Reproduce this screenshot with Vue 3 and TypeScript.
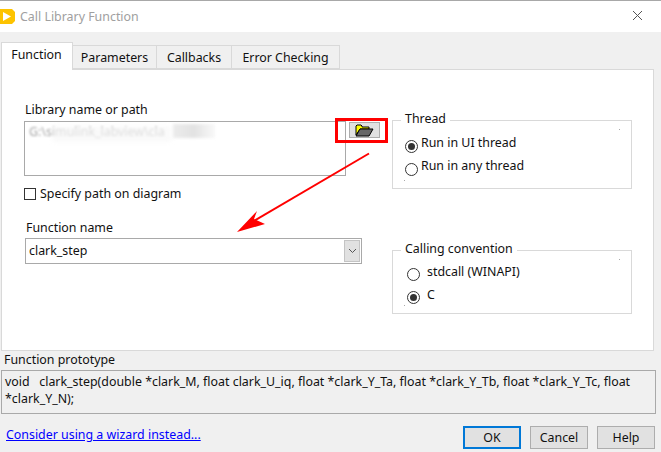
<script setup lang="ts">
const tabs: string[] = ['Function', 'Parameters', 'Callbacks', 'Error Checking']
const threads = [
  { label: 'Run in UI thread', on: true },
  { label: 'Run in any thread', on: false },
]
const conventions = [
  { label: 'stdcall (WINAPI)', on: false },
  { label: 'C', on: true },
]
</script>

<template>
  <div class="win">
    <header class="title">
      <svg class="logo" width="16" height="17" viewBox="0 0 16 17">
        <path d="M0 1H12L15 4V13L12 16H0Z" fill="#fdc300" />
        <path d="M3 4L11 8.5L3 13Z" fill="#fff" />
      </svg>
      <span class="title-text">Call Library Function</span>
      <svg class="close" width="11" height="11" viewBox="0 0 11 11">
        <path d="M1 1L10 10M10 1L1 10" stroke="#555" stroke-width="1" fill="none" />
      </svg>
    </header>

    <nav class="tabs">
      <div v-for="(t, i) in tabs" :key="t" class="tab" :class="{ active: i === 0 }">{{ t }}</div>
    </nav>

    <section class="panel">
      <div class="left">
        <div class="label">Library name or path</div>
        <div class="path-row">
          <div class="path-box">
            <span class="path-text">G:\simulink_labview\cla</span>
            <span class="smear"></span>
            <span class="smear-end"></span>
          </div>
          <button class="browse">
            <svg width="19" height="13" viewBox="0 0 19 13">
              <path d="M1 11V2L2 1H6L7 2V3H14V5H5L1 11Z" fill="#ffff00" stroke="#000" stroke-width="1" />
              <path d="M1 12L5 5H18L14 12Z" fill="#666" stroke="#000" stroke-width="1" />
            </svg>
          </button>
        </div>
        <label class="check">
          <span class="box"></span>
          <span>Specify path on diagram</span>
        </label>
        <div class="label fn-label">Function name</div>
        <div class="select">
          <span class="select-text">clark_step</span>
          <span class="select-btn">
            <svg width="9" height="6" viewBox="0 0 9 6">
              <path d="M1 1L4.5 4.5L8 1" stroke="#555" stroke-width="1" fill="none" />
            </svg>
          </span>
        </div>
      </div>

      <div class="right">
        <div class="group thread">
          <span class="legend">Thread</span>
          <div v-for="r in threads" :key="r.label" class="radio">
            <span class="dot" :class="{ on: r.on }"></span>
            <span class="radio-text">{{ r.label }}</span>
          </div>
          <i class="speck tr"></i>
          <i class="speck bl"></i>
        </div>
        <div class="group conv">
          <span class="legend">Calling convention</span>
          <div v-for="r in conventions" :key="r.label" class="radio">
            <span class="dot" :class="{ on: r.on }"></span>
            <span class="radio-text">{{ r.label }}</span>
          </div>
          <i class="speck tr"></i>
          <i class="speck bl"></i>
        </div>
      </div>
    </section>

    <div class="proto-label">Function prototype</div>
    <div class="proto">void&nbsp;&nbsp; clark_step(double *clark_M, float clark_U_iq, float *clark_Y_Ta, float *clark_Y_Tb, float *clark_Y_Tc, float *clark_Y_N);</div>

    <footer class="foot">
      <a class="wizard" href="#">Consider using a wizard instead...</a>
      <div class="btns">
        <button class="btn primary">OK</button>
        <button class="btn">Cancel</button>
        <button class="btn">Help</button>
      </div>
    </footer>

    <svg class="annot" width="661" height="452" viewBox="0 0 661 452">
      <rect x="336.5" y="119.5" width="50" height="22" fill="none" stroke="#f00" stroke-width="3" />
      <path d="M369 153.5L254 221" stroke="#f00" stroke-width="2" fill="none" />
      <path d="M237 232L257 211L254 219L265 224Z" fill="#f00" />
    </svg>
  </div>
</template>

<style>
html, body { margin: 0; padding: 0; background: #f0f0f0; }
</style>

<style scoped>
.win {
  position: relative;
  width: 661px;
  height: 452px;
  overflow: hidden;
  background: #f0f0f0;
  font-family: "Noto Sans", sans-serif;
  font-size: 12.4px;
  color: #111;
  box-sizing: border-box;
}
.title {
  height: 31px;
  background: #fff;
  border-top: 1px solid #a8a8a8;
  display: flex;
  align-items: center;
  position: relative;
}
.logo { flex: none; }
.title-text { margin-left: 4px; color: #a0a0a0; }
.close { position: absolute; left: 632px; top: 9px; }
.tabs {
  display: flex;
  height: 27px;
  margin-top: 10px;
  padding-left: 1px;
  align-items: flex-end;
  position: relative;
  z-index: 1;
}
.tab {
  height: 24px;
  line-height: 23px;
  box-sizing: border-box;
  border: 1px solid #d9d9d9;
  border-left: none;
  background: #f0f0f0;
  text-align: center;
  width: 84px;
}
.tab:nth-child(1) {
  width: 72px;
  height: 28px;
  margin-bottom: -1px;
  padding-right: 1px;
  line-height: 24px;
  background: #fff;
  border-left: 1px solid #d9d9d9;
  border-bottom: none;
}
.tab:nth-child(3) { width: 75px; }
.tab:nth-child(4) { width: 108px; }
.panel {
  width: 653px;
  height: 282px;
  margin-left: 1px;
  box-sizing: border-box;
  background: #fff;
  border: 1px solid #d9d9d9;
  display: flex;
}
.left { width: 367px; padding-left: 22px; padding-top: 31px; box-sizing: border-box; flex: none; }
.label { height: 18px; line-height: 18px; margin-left: 1px; }
.path-row { display: flex; align-items: flex-start; gap: 3px; margin-top: 2px; width: 360px; }
.path-box {
  width: 322px;
  height: 55px;
  box-sizing: border-box;
  border: 1px solid #a9a9a9;
  position: relative;
  overflow: hidden;
  padding: 1px 0 0 4px;
  line-height: 18px;
  flex: none;
}
.path-text { color: #a4a4a4; filter: blur(0.9px); }
.smear {
  position: absolute;
  left: 28px;
  top: 4px;
  width: 118px;
  height: 16px;
  background: #f7f7f7;
  filter: blur(2px);
  opacity: 0.72;
}
.smear-end {
  position: absolute;
  left: 148px;
  top: 2px;
  width: 42px;
  height: 14px;
  background: linear-gradient(90deg, #ececec, #e2e2e2 50%, #f0f0f0 80%, #f8f8f8);
  filter: blur(1.5px);
}
.browse {
  width: 31px;
  height: 16px;
  margin-top: 1px;
  padding: 0;
  background: #e1e1e1;
  border: 1px solid #adadad;
  display: flex;
  align-items: center;
  justify-content: center;
  flex: none;
}
.check { display: flex; align-items: center; gap: 4px; height: 18px; margin-top: 9px; line-height: 18px; }
.box { width: 12px; height: 12px; box-sizing: border-box; border: 1px solid #333; background: #fff; flex: none; }
.fn-label { margin-top: 16px; margin-left: 2px; }
.select {
  width: 337px;
  height: 26px;
  margin-left: 1px;
  margin-top: 1px;
  box-sizing: border-box;
  border: 1px solid #a9a9a9;
  display: flex;
  align-items: center;
  justify-content: space-between;
  padding: 0 0 0 3px;
}
.select-text { margin-top: -2px; }
.select-btn {
  width: 16px;
  height: 22px;
  background: #e1e1e1;
  border: 1px solid #c4c4c4;
  box-sizing: border-box;
  margin-right: 1px;
  display: flex;
  align-items: center;
  justify-content: center;
}
.right { padding-left: 23px; padding-top: 50px; }
.group {
  position: relative;
  width: 240px;
  box-sizing: border-box;
  border: 1px solid #d9d9d9;
}
.thread { height: 69px; padding-top: 12px; padding-left: 12px; }
.conv { height: 64px; margin-top: 61px; padding-top: 12px; padding-left: 14px; }
.legend {
  position: absolute;
  left: 8px;
  top: -11px;
  padding: 0 4px;
  height: 18px;
  line-height: 18px;
  background: #fff;
}
.radio { display: flex; align-items: flex-start; height: 23px; line-height: 18px; }
.dot {
  width: 13px;
  height: 13px;
  margin-top: 5px;
  box-sizing: border-box;
  border: 1px solid #333;
  border-radius: 50%;
  background: #fff;
  flex: none;
  display: flex;
  align-items: center;
  justify-content: center;
}
.thread .dot { margin-top: 7px; }
.dot.on::after {
  content: "";
  width: 7px;
  height: 7px;
  border-radius: 50%;
  background: #333;
}
.radio-text { margin-left: 3px; margin-top: 1px; }
.conv .radio-text { margin-left: 7px; margin-top: 0; }
.speck { position: absolute; width: 1px; height: 1px; background: #aaa; }
.speck.tr { right: 11px; top: 8px; }
.speck.bl { left: 11px; bottom: 7px; }
.proto-label { height: 18px; line-height: 18px; margin-left: 4px; }
.proto {
  width: 655px;
  height: 44px;
  margin-left: 1px;
  margin-top: 1px;
  box-sizing: border-box;
  border: 1px solid #a9a9a9;
  padding: 2px 3px;
  line-height: 17px;
}
.foot { position: relative; display: flex; justify-content: space-between; align-items: center; height: 23px; margin-top: 12px; padding: 0 6px; width: 649px; }
.wizard { color: #0000ff; text-decoration: underline; margin-bottom: 6px; }
.btns { display: flex; gap: 9px; }
.btn {
  width: 58px;
  height: 23px;
  padding: 0;
  box-sizing: border-box;
  background: #e1e1e1;
  border: 1px solid #adadad;
  font: inherit;
  color: #111;
  line-height: 19px;
}
.primary { border: 2px solid #0078d7; }
.annot { position: absolute; left: 0; top: 0; pointer-events: none; }
</style>
